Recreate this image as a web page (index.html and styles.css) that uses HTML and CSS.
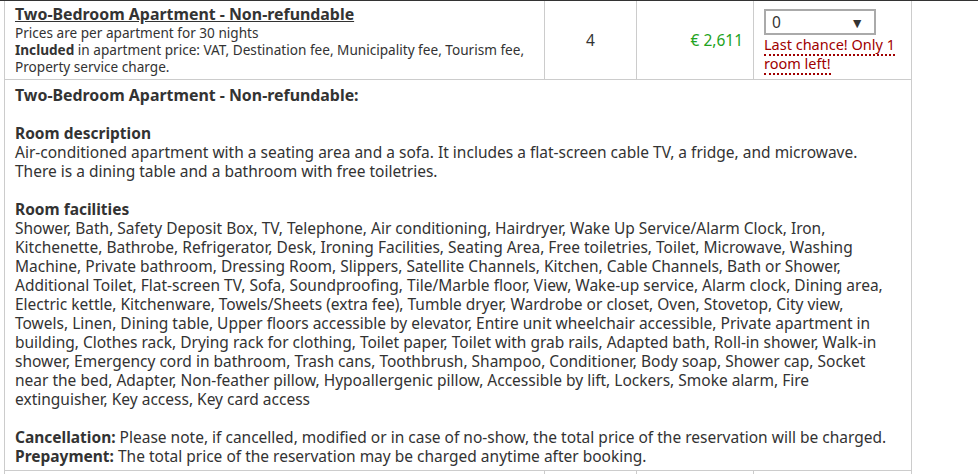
FILE: index.html
```html
<!DOCTYPE html>
<html lang="en">
<head>
    <meta charset="UTF-8">
    <meta name="viewport" content="width=device-width, initial-scale=1.0">
    <title>Two-Bedroom Apartment</title>
    <link rel="stylesheet" href="styles.css">
</head>
<body>
    <div class="topline"></div>
    <table class="rooms">
        <colgroup>
            <col class="col-name">
            <col class="col-guests">
            <col class="col-price">
            <col class="col-select">
        </colgroup>
        <tr class="room-row">
            <td class="room-name">
                <a href="#room-1" class="room-link">Two-Bedroom Apartment - Non-refundable</a>
                <div class="room-terms">
                    Prices are per apartment for 30 nights<br>
                    <b>Included</b> in apartment price: VAT, Destination fee, Municipality fee, Tourism fee, Property service charge.
                </div>
            </td>
            <td class="guests">4</td>
            <td class="price">€ 2,611</td>
            <td class="choose">
                <div class="select-wrap">
                    <select class="room-count">
                        <option>0</option>
                        <option>1</option>
                    </select>
                </div>
                <span class="scarcity">Last chance! Only 1 room left!</span>
            </td>
        </tr>
        <tr class="room-details" id="room-1">
            <td colspan="4">
                <div class="details-title">Two-Bedroom Apartment - Non-refundable:</div>
                <div class="details-block">
                    <b>Room description</b><br>
                    Air-conditioned apartment with a seating area and a sofa. It includes a flat-screen cable TV, a fridge, and microwave. There is a dining table and a bathroom with free toiletries.
                </div>
                <div class="details-block">
                    <b>Room facilities</b><br>
                    Shower, Bath, Safety Deposit Box, TV, Telephone, Air conditioning, Hairdryer, Wake Up Service/Alarm Clock, Iron, Kitchenette, Bathrobe, Refrigerator, Desk, Ironing Facilities, Seating Area, Free toiletries, Toilet, Microwave, Washing Machine, Private bathroom, Dressing Room, Slippers, Satellite Channels, Kitchen, Cable Channels, Bath or Shower, Additional Toilet, Flat-screen TV, Sofa, Soundproofing, Tile/Marble floor, View, Wake-up service, Alarm clock, Dining area, Electric kettle, Kitchenware, Towels/Sheets (extra fee), Tumble dryer, Wardrobe or closet, Oven, Stovetop, City view, Towels, Linen, Dining table, Upper floors accessible by elevator, Entire unit wheelchair accessible, Private apartment in building, Clothes rack, Drying rack for clothing, Toilet paper, Toilet with grab rails, Adapted bath, Roll-in shower, Walk-in shower, Emergency cord in bathroom, Trash cans, Toothbrush, Shampoo, Conditioner, Body soap, Shower cap, Socket near the bed, Adapter, Non-feather pillow, Hypoallergenic pillow, Accessible by lift, Lockers, Smoke alarm, Fire extinguisher, Key access, Key card access
                </div>
                <div class="details-block">
                    <b>Cancellation:</b> Please note, if cancelled, modified or in case of no-show, the total price of the reservation will be charged.<br>
                    <b>Prepayment:</b> The total price of the reservation may be charged anytime after booking.
                </div>
            </td>
        </tr>
        <tr class="room-row next">
            <td></td>
            <td></td>
            <td></td>
            <td></td>
        </tr>
    </table>
</body>
</html>
```
FILE: styles.css
```css
body {
    margin: 0;
    padding: 0;
    background: #fff;
    color: #333;
    font-family: "Noto Sans", "Open Sans", sans-serif;
    font-size: 15.5px;
    line-height: 19px;
}
.topline {
    height: 1px;
    background-color: #333;
}
.rooms {
    border-collapse: collapse;
    table-layout: fixed;
    width: 907px;
    margin-left: 4px;
}
.col-name { width: 540px; }
.col-guests { width: 92px; }
.col-price { width: 117px; }
.col-select { width: 158px; }
.rooms td {
    border: 1px solid #ccc;
    padding: 4px 10px;
}
.rooms tr:first-child td {
    border-top: none;
}
.room-link {
    color: #333;
    font-size: 15.9px;
    font-weight: bold;
    text-decoration: underline;
}
.room-terms {
    font-size: 13.6px;
    line-height: 17px;
}
.guests {
    text-align: center;
    vertical-align: middle;
}
.price {
    text-align: right;
    vertical-align: middle;
    color: #22a322;
}
.rooms td.choose {
    vertical-align: top;
    padding-right: 6px;
}
.select-wrap {
    position: relative;
    width: 112px;
    margin-top: 4px;
}
.room-count {
    appearance: none;
    -webkit-appearance: none;
    display: block;
    width: 112px;
    height: 26px;
    border: 2px solid #aaa;
    border-radius: 0;
    background: #fff;
    color: #333;
    font-family: inherit;
    font-size: 15.5px;
    padding: 0 6px;
}
/* down arrow drawn over the select */
.select-wrap::after {
    content: "▼";
    position: absolute;
    right: 12px;
    top: 6px;
    font-size: 14px;
    line-height: 16px;
    color: #333;
    pointer-events: none;
}
.scarcity {
    color: #a00000;
    font-size: 14.5px;
    line-height: 18px;
    border-bottom: 2px dotted #a00000;
}
.rooms .room-details td {
    padding: 6px 16px 4px 10px;
}
.details-title {
    font-size: 15.9px;
    font-weight: bold;
}
.details-block {
    margin-top: 19px;
}
.rooms .next td {
    height: 30px;
    padding: 0;
}
```
